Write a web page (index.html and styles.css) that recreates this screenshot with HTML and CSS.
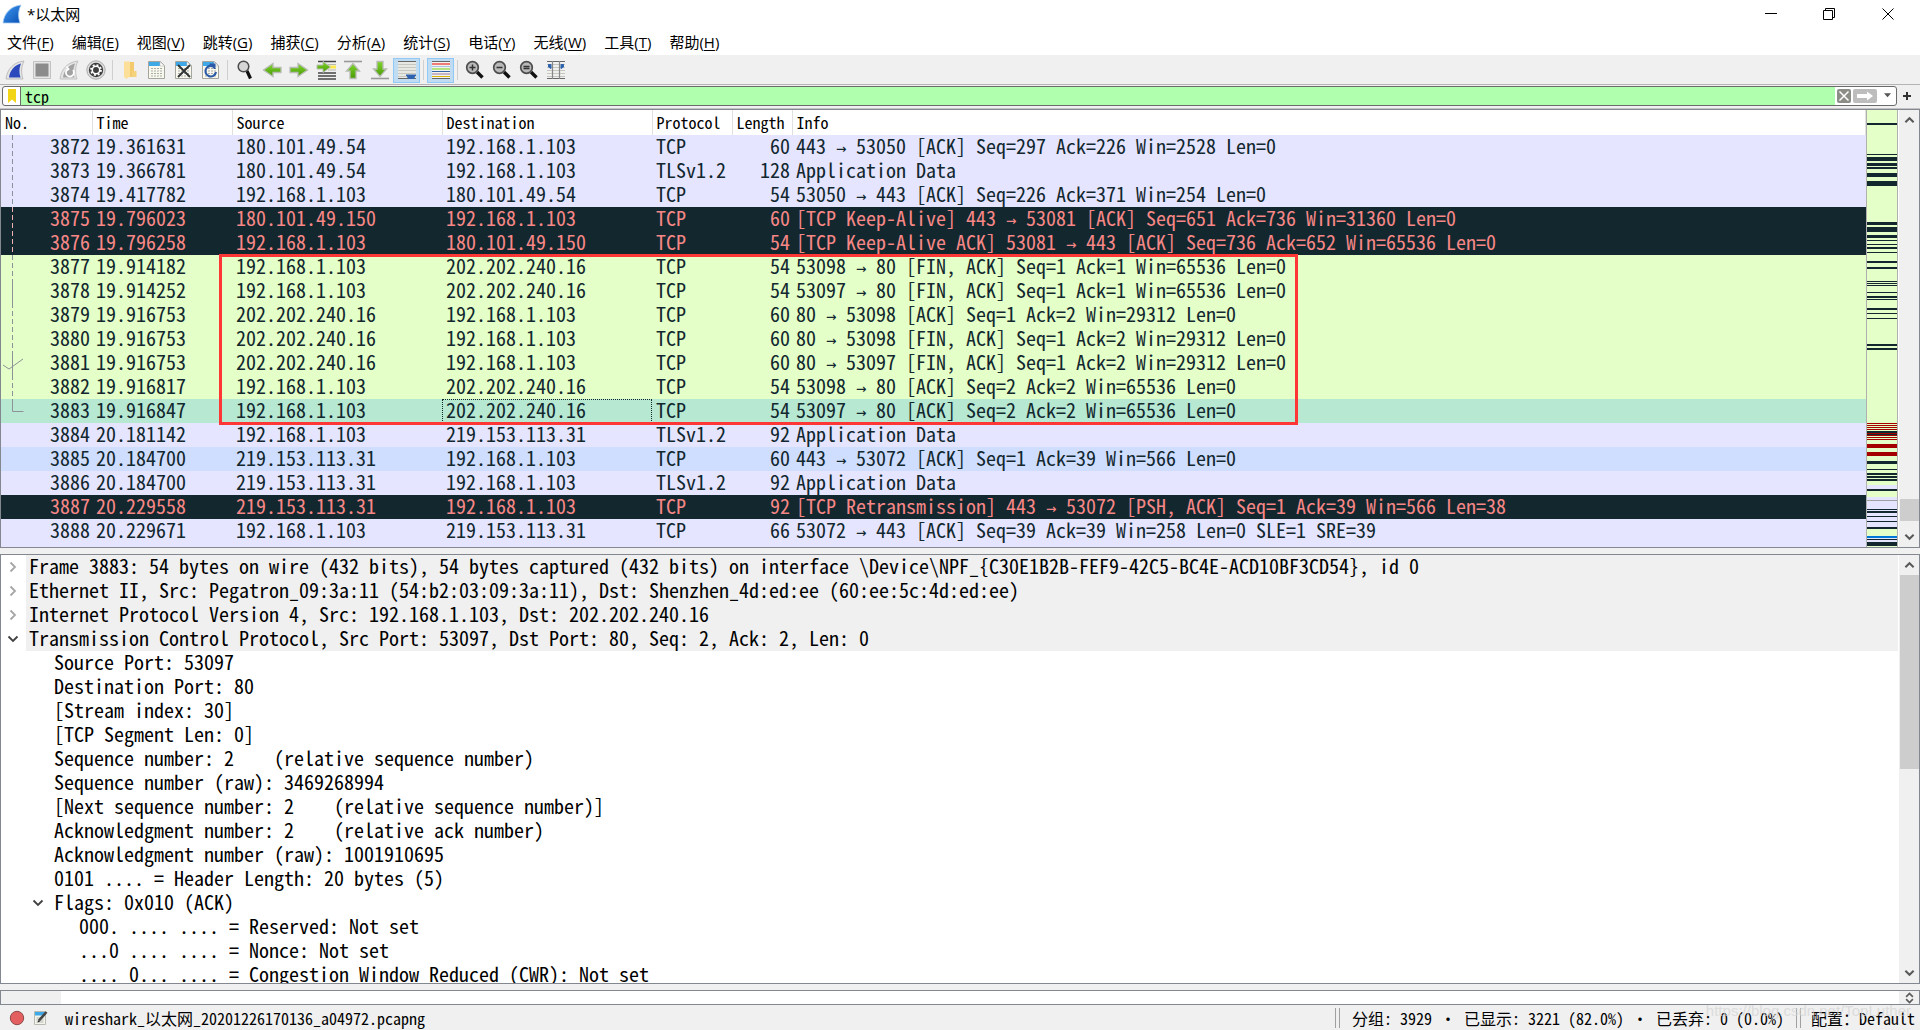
FILE: index.html
```html
<!DOCTYPE html>
<html lang="zh-CN">
<head>
<meta charset="utf-8">
<title>*以太网</title>
<link rel="stylesheet" href="styles.css">
</head>
<body>
<svg class="defs" aria-hidden="true">
  <defs>
    <linearGradient id="blue" x1="0" y1="0" x2="1" y2="1"><stop offset="0" stop-color="#3f9bf0"/><stop offset="1" stop-color="#0a4fb4"/></linearGradient>
    <linearGradient id="leaf" x1="0" y1="0" x2="0" y2="1"><stop offset="0" stop-color="#7fd62c"/><stop offset="1" stop-color="#4a9a06"/></linearGradient>
    <symbol id="doc" viewBox="0 0 20 20">
      <path d="M1.500 1.500h12l4 4v13h-16z" fill="#f8f8ee" stroke="#a4a59c"/>
      <path d="M2 2h11.500l3.500 4H2z" fill="#3fa9e8"/><path d="M13 1.500v4.500h4.500z" fill="#fff" stroke="#b8b8b0" stroke-width=".6"/>
      <path d="M4 8.500h11M4 11h11M4 13.500h11M4 16h11" stroke="#a9aba4" stroke-dasharray="2 1"/>
    </symbol>
    <symbol id="lens" viewBox="0 0 20 20">
      <path d="M12 12l5.500 5.500" stroke="#111" stroke-width="3.400"/>
      <circle cx="7.500" cy="7.500" r="5.800" fill="#b9b9b9" stroke="#4c4c4c" stroke-width="1.700"/>
    </symbol>
    <symbol id="lines" viewBox="0 0 20 20">
      <path d="M1 1.500h18M1 18.500h18" stroke="#666"/>
      <path d="M1 4.500h18M1 7.500h18M1 10.500h18M1 13.500h18M1 16.500h18" stroke="#c6c8bf"/>
    </symbol>
    <symbol id="arrow" viewBox="0 0 20 20">
      <path d="M1 7.500h8V3.500l9.500 6.500L9 16.500v-4H1z" fill="url(#leaf)" stroke="#b8bcb4" stroke-width="1.300"/>
    </symbol>
    <symbol id="up" viewBox="0 0 12 8"><path d="M1.500 6.500L6 2l4.500 4.500" fill="none" stroke="#5a5a5a" stroke-width="2.200"/></symbol>
    <symbol id="down" viewBox="0 0 12 8"><path d="M1.500 1.500L6 6l4.500-4.500" fill="none" stroke="#5a5a5a" stroke-width="2.200"/></symbol>
    <symbol id="closed" viewBox="0 0 8 12"><path d="M1.500 1.500L6 6l-4.500 4.500" fill="none" stroke="#a6a6a6" stroke-width="1.800"/></symbol>
    <symbol id="open" viewBox="0 0 12 8"><path d="M1.500 1.500L6 6l4.500-4.500" fill="none" stroke="#404040" stroke-width="1.800"/></symbol>
  </defs>
</svg>

<header class="titlebar">
  <svg class="logo" viewBox="0 0 20 20"><path d="M1 19C2 9 9 2 19 1c-3 6-3 12-1 18z" fill="url(#blue)" stroke="#a9cdf2" stroke-width=".8"/></svg>
  <h1>*以太网</h1>
  <div class="window-buttons">
    <button aria-label="最小化"><svg viewBox="0 0 12 12"><path d="M0 5.500h12" stroke="#000"/></svg></button>
    <button aria-label="还原"><svg viewBox="0 0 12 12"><path d="M.5 2.500h9v9h-9zM2.500 2.500V.5h9v9h-2" fill="none" stroke="#000"/></svg></button>
    <button aria-label="关闭"><svg viewBox="0 0 12 12"><path d="M.5.5l11 11M11.500.5l-11 11" stroke="#000"/></svg></button>
  </div>
</header>

<nav class="menubar">
  <button>文件(<u>F</u>)</button><button>编辑(<u>E</u>)</button><button>视图(<u>V</u>)</button><button>跳转(<u>G</u>)</button><button>捕获(<u>C</u>)</button><button>分析(<u>A</u>)</button><button>统计(<u>S</u>)</button><button>电话(<u>Y</u>)</button><button>无线(<u>W</u>)</button><button>工具(<u>T</u>)</button><button>帮助(<u>H</u>)</button>
</nav>

<div class="toolbar" role="toolbar">
  <button aria-label="开始捕获"><svg viewBox="0 0 20 20"><path d="M1 19C2 9 9 2 19 1c-3 6-3 12-1 18z" fill="#e4e4e4" stroke="#bdbdbd"/><path d="M4 17.500C5 10 10 5 16 3.500c-2 5-2 9-.5 14z" fill="#2b49bd"/></svg></button>
  <button aria-label="停止捕获"><svg viewBox="0 0 20 20"><path d="M1.500 1.500h17v17h-17z" fill="#e6e6e6" stroke="#c2c2c2"/><path d="M3.500 3.500h13v13h-13z" fill="#8c8c8c"/></svg></button>
  <button aria-label="重新开始"><svg viewBox="0 0 20 20"><path d="M1 19C2 9 9 2 19 1c-3 6-3 12-1 18z" fill="#e4e4e4" stroke="#c2c2c2"/><path d="M4 17.500C5 10 10 5 16 3.500c-2 5-2 9-.5 14z" fill="#a2a2a2"/><path d="M14 10a4 4 0 1 1-5-1M7.500 6.500l2 2.500-2.500 2" fill="none" stroke="#fff" stroke-width="1.800"/></svg></button>
  <button aria-label="捕获选项"><svg viewBox="0 0 20 20"><circle cx="10" cy="10" r="9.200" fill="#ddd" stroke="#aaa"/><circle cx="10" cy="10" r="7.200" fill="#3d3d3d"/><circle cx="10" cy="10" r="3.700" fill="none" stroke="#fff" stroke-width="1.500"/><circle cx="10" cy="10" r="5" fill="none" stroke="#fff" stroke-width="1.800" stroke-dasharray="1.900 2.020"/></svg></button>
  <span class="separator"></span>
  <button aria-label="打开"><svg viewBox="0 0 20 20"><path d="M5 2h9v15H5z" fill="#f3cb6c"/><path d="M12 11h4.500v6H12z" fill="#f5d27c"/><path d="M4 1.500h6v15l-3.500 2.500L4 17z" fill="#fce09a"/></svg></button>
  <button aria-label="保存"><svg viewBox="0 0 20 20"><use href="#doc"/></svg></button>
  <button aria-label="关闭文件"><svg viewBox="0 0 20 20"><use href="#doc"/><path d="M4 5l12 12M16 5L4 17" stroke="#303434" stroke-width="1.900"/></svg></button>
  <button aria-label="重新加载"><svg viewBox="0 0 20 20"><use href="#doc"/><path d="M14 8a5.300 5.300 0 1 0 1 4M8.500 4.500h5V9" fill="none" stroke="#2c5aa6" stroke-width="2.100"/></svg></button>
  <span class="separator"></span>
  <button aria-label="查找"><svg viewBox="0 0 20 20"><path d="M12 11l3.500 7.500" stroke="#111" stroke-width="3.200"/><circle cx="8.500" cy="6.500" r="5.300" fill="#d6d6d6" stroke="#4c4c4c" stroke-width="1.500"/></svg></button>
  <button aria-label="后退"><svg viewBox="0 0 20 20"><path d="M19 7.500h-8V3.500L1.500 10l9.500 6.500v-4h8z" fill="url(#leaf)" stroke="#b8bcb4" stroke-width="1.300"/></svg></button>
  <button aria-label="前进"><svg viewBox="0 0 20 20"><use href="#arrow"/></svg></button>
  <button aria-label="转到分组"><svg viewBox="0 0 20 20"><path d="M2 1.500h18M2 13h18M2 16h18M2 19h18" stroke="#444" stroke-width="1.300"/><path d="M12 4.500h8M12 10h8" stroke="#b5b7b0"/><path d="M12 7h8" stroke="#fce94f" stroke-width="3"/><path d="M1 5h6V1.500L14.500 7 7 12.500V9H1z" fill="url(#leaf)" stroke="#b8bcb4"/></svg></button>
  <button aria-label="首个分组"><svg viewBox="0 0 20 20"><path d="M1 1.500h18" stroke="#999" stroke-width="1.600"/><path d="M7 18.500V11H3.500L10 3.500 16.500 11H13v7.500z" fill="url(#leaf)" stroke="#b8bcb4" stroke-width="1.300"/></svg></button>
  <button aria-label="末个分组"><svg viewBox="0 0 20 20"><path d="M1 18.500h18" stroke="#999" stroke-width="1.600"/><path d="M7 1.500V9H3.500L10 16.500 16.500 9H13V1.500z" fill="url(#leaf)" stroke="#b8bcb4" stroke-width="1.300"/></svg></button>
  <button class="checked" aria-label="自动滚动" aria-pressed="true"><svg viewBox="0 0 20 20"><path d="M1 1h18v18H1z" fill="#e7e8e3"/><use href="#lines"/><path d="M9 14.500h10v1.500h-1c0 2-1 3-2 3h-4c-1 0-2-1-2-3H9z" fill="#2f62ae"/></svg></button>
  <span class="separator"></span>
  <button class="checked" aria-label="着色" aria-pressed="true"><svg viewBox="0 0 20 20"><path d="M1 1h18v18H1z" fill="#f2f2ee"/><path d="M1 1.500h18M1 18.500h18" stroke="#666"/><path d="M1 4h18" stroke="#ef2929" stroke-width="1.200"/><path d="M1 6.500h18" stroke="#a9c4e2"/><path d="M1 9h18" stroke="#73d216"/><path d="M1 11.500h18" stroke="#3465a4"/><path d="M1 14h18" stroke="#9a7a9f"/><path d="M1 16.500h18" stroke="#d9b300"/></svg></button>
  <span class="separator"></span>
  <button aria-label="放大"><svg viewBox="0 0 20 20"><use href="#lens"/><path d="M4.500 7.500h6M7.500 4.500v6" stroke="#333" stroke-width="1.500"/></svg></button>
  <button aria-label="缩小"><svg viewBox="0 0 20 20"><use href="#lens"/><path d="M4.500 7.500h6" stroke="#333" stroke-width="1.500"/></svg></button>
  <button aria-label="原始大小"><svg viewBox="0 0 20 20"><use href="#lens"/><path d="M4.500 6.500h6M4.500 8.500h6" stroke="#333" stroke-width="1.300"/></svg></button>
  <button aria-label="调整列宽"><svg viewBox="0 0 20 20"><use href="#lines"/><path d="M6.500 1v18M13.500 1v18" stroke="#888" stroke-width="1.200"/><path d="M2.500 4.500h2.500v4L2.500 7zM17.500 4.500H15v4L17.500 7z" fill="#2f62ae" stroke="#2f62ae"/></svg></button>
</div>

<form class="filterbar">
  <div class="filter">
    <button type="button" class="bookmark" aria-label="书签"><svg viewBox="0 0 8 14"><path d="M0 0h8v14L4 10.500 0 14z" fill="#f2d516"/></svg></button>
    <input type="text" value="tcp" aria-label="显示过滤器">
    <button type="button" class="clear" aria-label="清除"><svg viewBox="0 0 14 14"><rect width="14" height="14" rx="2" fill="#8b8d87"/><path d="M2.500 2.500l9 9M11.500 2.500l-9 9" stroke="#fff" stroke-width="1.500"/></svg></button>
    <button type="button" class="apply" aria-label="应用"><svg viewBox="0 0 24 14"><rect width="24" height="14" rx="2" fill="#bdbdbd"/><path d="M4 5h10V2.500L20 7l-6 4.500V9H4z" fill="#fff"/></svg></button>
    <button type="button" class="history" aria-label="历史"><svg viewBox="0 0 8 5"><path d="M0 0h8L4 4.500z" fill="#555"/></svg></button>
  </div>
  <button type="button" class="add" aria-label="添加"><svg viewBox="0 0 8 8"><path d="M0 4h8M4 0v8" stroke="#333" stroke-width="2"/></svg></button>
</form>

<main>
  <section class="pane list">
    <div class="packets">
      <table>
        <colgroup><col class="c-no"><col class="c-time"><col class="c-addr"><col class="c-addr"><col class="c-proto"><col class="c-len"><col></colgroup>
        <thead><tr><th>No.</th><th>Time</th><th>Source</th><th>Destination</th><th>Protocol</th><th>Length</th><th>Info</th></tr></thead>
        <tbody>
          <tr><td>3872</td><td>19.361631</td><td>180.101.49.54</td><td>192.168.1.103</td><td>TCP</td><td>60</td><td>443 <i>→</i> 53050 [ACK] Seq=297 Ack=226 Win=2528 Len=0</td></tr>
          <tr><td>3873</td><td>19.366781</td><td>180.101.49.54</td><td>192.168.1.103</td><td>TLSv1.2</td><td>128</td><td>Application Data</td></tr>
          <tr><td>3874</td><td>19.417782</td><td>192.168.1.103</td><td>180.101.49.54</td><td>TCP</td><td>54</td><td>53050 <i>→</i> 443 [ACK] Seq=226 Ack=371 Win=254 Len=0</td></tr>
          <tr class="bad"><td>3875</td><td>19.796023</td><td>180.101.49.150</td><td>192.168.1.103</td><td>TCP</td><td>60</td><td>[TCP Keep-Alive] 443 <i>→</i> 53081 [ACK] Seq=651 Ack=736 Win=31360 Len=0</td></tr>
          <tr class="bad"><td>3876</td><td>19.796258</td><td>192.168.1.103</td><td>180.101.49.150</td><td>TCP</td><td>54</td><td>[TCP Keep-Alive ACK] 53081 <i>→</i> 443 [ACK] Seq=736 Ack=652 Win=65536 Len=0</td></tr>
          <tr class="http"><td>3877</td><td>19.914182</td><td>192.168.1.103</td><td>202.202.240.16</td><td>TCP</td><td>54</td><td>53098 <i>→</i> 80 [FIN, ACK] Seq=1 Ack=1 Win=65536 Len=0</td></tr>
          <tr class="http"><td>3878</td><td>19.914252</td><td>192.168.1.103</td><td>202.202.240.16</td><td>TCP</td><td>54</td><td>53097 <i>→</i> 80 [FIN, ACK] Seq=1 Ack=1 Win=65536 Len=0</td></tr>
          <tr class="http"><td>3879</td><td>19.916753</td><td>202.202.240.16</td><td>192.168.1.103</td><td>TCP</td><td>60</td><td>80 <i>→</i> 53098 [ACK] Seq=1 Ack=2 Win=29312 Len=0</td></tr>
          <tr class="http"><td>3880</td><td>19.916753</td><td>202.202.240.16</td><td>192.168.1.103</td><td>TCP</td><td>60</td><td>80 <i>→</i> 53098 [FIN, ACK] Seq=1 Ack=2 Win=29312 Len=0</td></tr>
          <tr class="http"><td>3881</td><td>19.916753</td><td>202.202.240.16</td><td>192.168.1.103</td><td>TCP</td><td>60</td><td>80 <i>→</i> 53097 [FIN, ACK] Seq=1 Ack=2 Win=29312 Len=0</td></tr>
          <tr class="http"><td>3882</td><td>19.916817</td><td>192.168.1.103</td><td>202.202.240.16</td><td>TCP</td><td>54</td><td>53098 <i>→</i> 80 [ACK] Seq=2 Ack=2 Win=65536 Len=0</td></tr>
          <tr class="selected"><td>3883</td><td>19.916847</td><td>192.168.1.103</td><td class="focus">202.202.240.16</td><td>TCP</td><td>54</td><td>53097 <i>→</i> 80 [ACK] Seq=2 Ack=2 Win=65536 Len=0</td></tr>
          <tr><td>3884</td><td>20.181142</td><td>192.168.1.103</td><td>219.153.113.31</td><td>TLSv1.2</td><td>92</td><td>Application Data</td></tr>
          <tr class="hover"><td>3885</td><td>20.184700</td><td>219.153.113.31</td><td>192.168.1.103</td><td>TCP</td><td>60</td><td>443 <i>→</i> 53072 [ACK] Seq=1 Ack=39 Win=566 Len=0</td></tr>
          <tr><td>3886</td><td>20.184700</td><td>219.153.113.31</td><td>192.168.1.103</td><td>TLSv1.2</td><td>92</td><td>Application Data</td></tr>
          <tr class="bad"><td>3887</td><td>20.229558</td><td>219.153.113.31</td><td>192.168.1.103</td><td>TCP</td><td>92</td><td>[TCP Retransmission] 443 <i>→</i> 53072 [PSH, ACK] Seq=1 Ack=39 Win=566 Len=38</td></tr>
          <tr><td>3888</td><td>20.229671</td><td>192.168.1.103</td><td>219.153.113.31</td><td>TCP</td><td>66</td><td>53072 <i>→</i> 443 [ACK] Seq=39 Ack=39 Win=258 Len=0 SLE=1 SRE=39</td></tr>
        </tbody>
      </table>
      <svg class="related" viewBox="0 0 24 288" fill="none" stroke="#8d9298">
        <path d="M11.500 0v144M11.500 168v48M11.500 240v24" stroke-dasharray="5 3"/>
        <path d="M11.500 72v48" stroke="#f4b0b0" stroke-dasharray="5 3"/>
        <path d="M11.500 144v24M11.500 216v26M11.500 264v12.500h11M2 230l6 4 14-10"/>
      </svg>
      <div class="highlight"></div>
    </div>
    <svg class="minimap" viewBox="0 0 30 437" preserveAspectRatio="none" shape-rendering="crispEdges">
      <path fill="#e4ffc7" d="M0 0h30v437H0z"/>
      <path fill="#e5e5ff" d="M0 375h30v4H0zM0 387h30v30H0zM0 428h30v4H0z"/>
      <path fill="#12272e" d="M0 13h30v2H0zM0 44h30v1H0zM0 47h30v4H0zM0 53h30v3H0zM0 57h30v2H0zM0 63h30v4H0zM0 71h30v5H0zM0 112h30v3H0zM0 117h30v5H0zM0 125h30v3H0zM0 130h30v1H0zM0 134h30v1H0zM0 137h30v2H0zM0 142h30v1H0zM0 151h30v2H0zM0 157h30v2H0zM0 171h30v1H0zM0 173h30v1H0zM0 175h30v1H0zM0 182h30v1H0zM0 186h30v2H0zM0 189h30v1H0zM0 198h30v2H0zM0 203h30v1H0zM0 208h30v1H0zM0 234h30v2H0zM0 238h30v2H0zM0 321h30v5H0zM0 351h30v3H0zM0 359h30v1H0zM0 363h30v2H0zM0 366h30v2H0zM0 369h30v2H0zM0 379h30v2H0zM0 399h30v1H0zM0 401h30v2H0zM0 406h30v1H0zM0 411h30v1H0zM0 417h30v2H0zM0 429h30v1H0zM0 432h30v4H0z"/>
      <path fill="#a40000" d="M0 313h30v1H0zM0 315h30v1H0zM0 317h30v1H0zM0 319h30v1H0zM0 323h30v1H0zM0 325h30v1H0zM0 327h30v1H0zM0 329h30v1H0zM0 334h30v4H0zM0 342h30v4H0z"/>
      <path fill="#0078d7" d="M0 426h30v2H0z"/>
      <path fill="#a0a0a0" d="M0 390h30v1H0z"/>
    </svg>
    <div class="scrollbar">
      <svg viewBox="0 0 12 8"><use href="#up"/></svg>
      <div class="track near-end"><div class="thumb"></div></div>
      <svg viewBox="0 0 12 8"><use href="#down"/></svg>
    </div>
  </section>

  <section class="pane details">
    <ul class="tree">
      <li class="proto"><button aria-label="展开"><svg class="right" viewBox="0 0 8 12"><use href="#closed"/></svg></button><span>Frame 3883: 54 bytes on wire (432 bits), 54 bytes captured (432 bits) on interface \Device\NPF_{C30E1B2B-FEF9-42C5-BC4E-ACD10BF3CD54}, id 0</span></li>
      <li class="proto"><button aria-label="展开"><svg class="right" viewBox="0 0 8 12"><use href="#closed"/></svg></button><span>Ethernet II, Src: Pegatron_09:3a:11 (54:b2:03:09:3a:11), Dst: Shenzhen_4d:ed:ee (60:ee:5c:4d:ed:ee)</span></li>
      <li class="proto"><button aria-label="展开"><svg class="right" viewBox="0 0 8 12"><use href="#closed"/></svg></button><span>Internet Protocol Version 4, Src: 192.168.1.103, Dst: 202.202.240.16</span></li>
      <li class="proto"><button aria-label="折叠"><svg viewBox="0 0 12 8"><use href="#open"/></svg></button><span>Transmission Control Protocol, Src Port: 53097, Dst Port: 80, Seq: 2, Ack: 2, Len: 0</span></li>
      <li class="field"><span>Source Port: 53097</span></li>
      <li class="field"><span>Destination Port: 80</span></li>
      <li class="field"><span>[Stream index: 30]</span></li>
      <li class="field"><span>[TCP Segment Len: 0]</span></li>
      <li class="field"><span>Sequence number: 2    (relative sequence number)</span></li>
      <li class="field"><span>Sequence number (raw): 3469268994</span></li>
      <li class="field"><span>[Next sequence number: 2    (relative sequence number)]</span></li>
      <li class="field"><span>Acknowledgment number: 2    (relative ack number)</span></li>
      <li class="field"><span>Acknowledgment number (raw): 1001910695</span></li>
      <li class="field"><span>0101 .... = Header Length: 20 bytes (5)</span></li>
      <li class="group"><button aria-label="折叠"><svg viewBox="0 0 12 8"><use href="#open"/></svg></button><span>Flags: 0x010 (ACK)</span></li>
      <li class="flag"><span>000. .... .... = Reserved: Not set</span></li>
      <li class="flag"><span>...0 .... .... = Nonce: Not set</span></li>
      <li class="flag"><span>.... 0... .... = Congestion Window Reduced (CWR): Not set</span></li>
    </ul>
    <div class="scrollbar">
      <svg viewBox="0 0 12 8"><use href="#up"/></svg>
      <div class="track"><div class="thumb tall"></div></div>
      <svg viewBox="0 0 12 8"><use href="#down"/></svg>
    </div>
  </section>

  <section class="pane bytes">
    <div class="offsets"></div>
    <div class="hex"></div>
    <div class="scrollbar tiny"><svg viewBox="0 0 12 8"><use href="#up"/></svg><svg viewBox="0 0 12 8"><use href="#down"/></svg></div>
  </section>
</main>

<footer class="statusbar">
  <button aria-label="专家信息"><svg viewBox="0 0 16 16"><circle cx="8" cy="8" r="6.700" fill="#e46060" stroke="#8e4a4a"/></svg></button>
  <button aria-label="捕获文件注释"><svg viewBox="0 0 16 16"><path d="M1.500 1.500h11v13h-11z" fill="#f4f4ec" stroke="#b9bab2"/><path d="M2 2h10v3.500H2z" fill="#3fa9e8"/><path d="M3.500 8h7M3.500 10h7M3.500 12h7" stroke="#b5b7b0"/><path d="M6 10.500L13.500 2" stroke="#444" stroke-width="2.600"/><path d="M4.500 12.500l2.500-1-1.500-1.500z" fill="#222"/></svg></button>
  <span class="file">wireshark_以太网_20201226170136_a04972.pcapng</span>
  <span class="grip"></span>
  <span class="counts">分组: 3929 · 已显示: 3221 (82.0%) · 已丢弃: 0 (0.0%)</span>
  <span class="grip"></span>
  <span class="profile">配置：Default</span>
  <span class="watermark">https://blog.csdn.net/TopLuther</span>
</footer>
</body>
</html>
```
FILE: styles.css
```css
* { box-sizing: border-box; }

body {
  margin: 0;
  height: 100vh;
  display: flex;
  flex-direction: column;
  overflow: hidden;
  background: #f0f0f0;
  color: #000;
  font: 15px/20px "Open Sans", "Noto Sans CJK SC", sans-serif;
}

button {
  margin: 0;
  padding: 0;
  border: 0;
  background: none;
  font: inherit;
  color: inherit;
  display: flex;
  align-items: center;
  justify-content: center;
}

svg { display: block; }
.defs { position: absolute; width: 0; height: 0; }

/* Title and menus */
.titlebar {
  height: 28px;
  padding: 0 2px;
  display: flex;
  align-items: center;
  gap: 5px;
  background: #fff;
}
.logo { width: 20px; height: 20px; }
h1 { margin: 0; font-size: 15px; font-weight: 400; }
.window-buttons { margin-left: auto; display: flex; }
.window-buttons button { width: 58px; height: 28px; }
.window-buttons button:last-child { width: 60px; }
.window-buttons svg { width: 12px; height: 12px; }

.menubar {
  height: 28px;
  padding-left: 7px;
  display: flex;
  align-items: center;
  gap: 18px;
  background: #fff;
  border-bottom: 1px solid #f0f0f0;
}
.menubar u { text-underline-offset: 2px; }

/* Toolbar */
.toolbar {
  height: 29px;
  padding: 0 1px;
  display: flex;
  align-items: center;
  border-bottom: 1px solid #b4b4b4;
}
.toolbar button { width: 27px; height: 25px; }
.toolbar svg { width: 20px; height: 20px; }
.toolbar .checked { background: #c0dcf3; border: 1px solid #90c8f6; }
.separator { width: 1px; height: 20px; margin: 0 3px; background: #cfcfcf; }

/* Display filter */
.filterbar {
  height: 24px;
  padding: 0 9px 2px 2px;
  display: flex;
  align-items: center;
  gap: 6px;
  border-bottom: 1px solid #c4c4c4;
}
.filter {
  flex: 1;
  height: 20px;
  display: flex;
  align-items: stretch;
  border: 1px solid #6b6b6b;
  border-radius: 3px;
  background: #fff;
}
.bookmark { width: 18px; border-right: 1px solid #6b6b6b; }
.bookmark svg { width: 8px; height: 14px; }
.filter input {
  flex: 1;
  min-width: 0;
  padding: 0 4px;
  border: 0;
  outline: 0;
  background: #afffaf;
  font: 16px/18px "Noto Sans Mono CJK SC", "Liberation Mono", monospace;
}
.clear { width: 17px; }
.clear svg { width: 14px; height: 14px; }
.apply { width: 26px; }
.apply svg { width: 24px; height: 14px; }
.history { width: 18px; }
.history svg { width: 7px; height: 5px; }
.add svg { width: 8px; height: 8px; }

/* Stacked panes */
main {
  flex: 1;
  min-height: 0;
  display: flex;
  flex-direction: column;
  gap: 6px;
}
.pane {
  display: flex;
  min-height: 0;
  overflow: hidden;
  border: 1px solid #828790;
  background: #fff;
}
.list { flex: 439 1 0; }
.details { flex: 430 1 0; }
.bytes { flex: 0 0 15px; }

.packets {
  position: relative;
  flex: 1;
  min-width: 0;
  overflow: hidden;
  background: #e5e5ff;
}
table {
  width: 100%;
  table-layout: fixed;
  border-collapse: collapse;
}
.c-no { width: 91px; }
.c-time { width: 140px; }
.c-addr { width: 210px; }
.c-proto { width: 80px; }
.c-len { width: 60px; }
th {
  height: 25px;
  padding: 0 0 0 4px;
  background: #fff;
  border-right: 1px solid #e0e0e0;
  text-align: left;
  vertical-align: top;
  font: 16px/24px "Noto Sans Mono CJK SC", "Liberation Mono", monospace;
}
td {
  height: 24px;
  padding: 0 2px 0 4px;
  white-space: nowrap;
  vertical-align: top;
  color: #12272e;
  font: 20px/22px "Noto Sans Mono CJK SC", "Liberation Mono", monospace;
}
td:nth-child(1), td:nth-child(6) { text-align: right; }
td i {
  display: inline-block;
  width: 10px;
  font: 17px/10px "DejaVu Sans Mono", monospace;
}
.http { background: #e4ffc7; }
.bad { background: #12272e; }
.bad td { color: #f78787; }
.selected { background: #b7e8d2; }
.hover { background: #cfdeff; }
.focus { outline: 1px dotted #12272e; outline-offset: -1px; }

.related { position: absolute; left: 0; top: 25px; width: 24px; height: 288px; }
.highlight {
  position: absolute;
  left: 218px;
  top: 144px;
  width: 1079px;
  height: 171px;
  border: 3px solid #ff3636;
}

.minimap {
  width: 32px;
  height: 100%;
  border: 1px solid #b0b0b0;
  border-width: 0 1px;
}

.scrollbar {
  width: 21px;
  padding: 6px 1px;
  display: flex;
  flex-direction: column;
  align-items: center;
  gap: 6px;
  background: #f0f0f0;
  border-left: 1px solid #fff;
}
.scrollbar svg { width: 11px; height: 8px; flex: none; }
.track { flex: 1; width: 19px; display: flex; flex-direction: column; }
.near-end { justify-content: flex-end; padding-bottom: 6px; }
.thumb { height: 22px; background: #cdcdcd; }
.tall { height: 50%; }
.tiny { padding: 0; gap: 0; justify-content: center; }
.tiny svg { height: 6px; }

/* Packet details */
.tree {
  flex: 1;
  min-width: 0;
  margin: 0;
  padding: 0;
  overflow: hidden;
  list-style: none;
  font: 20px/22px "Noto Sans Mono CJK SC", "Liberation Mono", monospace;
}
.tree li { height: 24px; display: flex; white-space: pre; }
.tree button { flex: none; width: 25px; height: 24px; padding-right: 2px; }
.tree svg { width: 12px; height: 8px; }
.tree .right { width: 8px; height: 12px; }
.tree span { flex: 1; padding-left: 3px; }
.proto span { background: #f0f0f0; }
.field { padding-left: 50px; }
.group { padding-left: 25px; }
.flag { padding-left: 75px; }

.offsets { width: 60px; background: #f0f0f0; }
.hex { flex: 1; }

/* Status bar */
.statusbar {
  position: relative;
  height: 25px;
  padding: 0 5px 0 9px;
  display: flex;
  align-items: center;
  font: 16px/24px "Noto Sans Mono CJK SC", "Liberation Mono", monospace;
  white-space: pre;
}
.statusbar button { width: 16px; margin-right: 8px; }
.statusbar svg { width: 16px; height: 16px; }
.file { flex: 1; margin-left: 8px; }
.grip { width: 5px; height: 20px; border: 1px solid #a0a0a0; border-width: 0 1px; }
.counts { margin: 0 12px; }
.profile { margin-left: 10px; }
.watermark {
  position: absolute;
  right: 9px;
  top: -6px;
  font: 15px/24px "Liberation Sans", sans-serif;
  color: #d4d4d4;
  opacity: 0.7;
}
```
